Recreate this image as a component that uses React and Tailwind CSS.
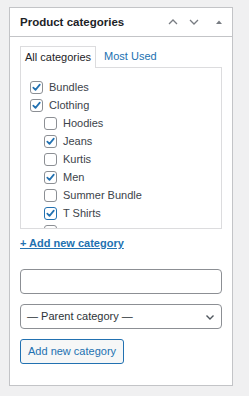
import React from "react";

const categories = [
    { name: "Bundles", checked: true, level: 0 },
    { name: "Clothing", checked: true, level: 0 },
    { name: "Hoodies", checked: false, level: 1 },
    { name: "Jeans", checked: true, level: 1 },
    { name: "Kurtis", checked: false, level: 1 },
    { name: "Men", checked: true, level: 1 },
    { name: "Summer Bundle", checked: false, level: 1 },
    { name: "T Shirts", checked: true, level: 1, focused: true },
];

function Checkbox({ checked, focused }) {
    return (
        <span
            className={
                focused
                    ? "w-[13px] h-[13px] rounded-[3px] border-[1.5px] border-[#2271b1] bg-white flex items-center justify-center shrink-0"
                    : "w-[13px] h-[13px] rounded-[3px] border border-[#8c8f94] bg-white flex items-center justify-center shrink-0"
            }
        >
            {checked && (
                <svg width="11" height="11" viewBox="0 0 11 11">
                    <path
                        d="M2.3 5.6 L4.5 7.9 L8.8 2.6"
                        fill="none"
                        stroke="#2271b1"
                        strokeWidth="1.7"
                        strokeLinecap="round"
                        strokeLinejoin="round"
                    />
                </svg>
            )}
        </span>
    );
}

export default function App() {
    return (
        <div
            className="w-[249px] h-[396px] bg-[#f0f0f1] pt-[7px] pl-[9px] text-[#1d2327]"
            style={{ fontFamily: '"Liberation Sans", Arial, sans-serif' }}
        >
            <div className="w-[224px] h-[379px] bg-white border border-[#c3c4c7] flex flex-col">
                {/* Header */}
                <div className="h-[29px] border-b border-[#c3c4c7] flex items-center pl-[10px] pr-[7px]">
                    <h2 className="text-[11.5px] font-bold flex-1 pt-[1px]">Product categories</h2>
                    <div className="flex items-center">
                        <svg width="20" height="20" viewBox="0 0 20 20" className="mr-[1px]">
                            <path d="M6 12 L10 8 L14 12" fill="none" stroke="#787c82" strokeWidth="1.3" />
                        </svg>
                        <svg width="20" height="20" viewBox="0 0 20 20" className="mr-[9px]">
                            <path d="M6 8 L10 12 L14 8" fill="none" stroke="#787c82" strokeWidth="1.3" />
                        </svg>
                        <svg width="12" height="20" viewBox="0 0 12 20">
                            <path d="M3 12 L6 8.5 L9 12 Z" fill="#787c82" />
                        </svg>
                    </div>
                </div>

                {/* Body */}
                <div className="px-[10px] pt-[8px] flex flex-col">
                    <div className="flex items-end text-[11px] h-[22px]">
                        <div className="h-[22px] px-[4px] border border-b-0 border-[#dcdcde] bg-white relative -mb-px z-10 flex items-center text-[#1d2327]">
                            All categories
                        </div>
                        <div className="h-[21px] pl-[8px] flex items-center text-[#2271b1]">Most Used</div>
                    </div>
                    <div className="h-[162px] border border-[#dcdcde] overflow-hidden pt-[10px] pl-[9px]">
                        {categories.map((c) => (
                            <div
                                key={c.name}
                                className={
                                    c.level === 1
                                        ? "h-[18.1px] flex items-center gap-[6px] pl-[14px] text-[11px] text-[#3c434a]"
                                        : "h-[18.1px] flex items-center gap-[6px] text-[11px] text-[#3c434a]"
                                }
                            >
                                <Checkbox checked={c.checked} focused={c.focused} />
                                <span>{c.name}</span>
                            </div>
                        ))}
                        {/* next row, scrolled out of view */}
                        <div className="h-[18.1px] flex items-center pl-[14px]">
                            <Checkbox checked={false} />
                        </div>
                    </div>

                    <a className="mt-[6px] text-[11px] font-bold text-[#2271b1] underline self-start leading-[16px]">
                        + Add new category
                    </a>

                    <input
                        type="text"
                        className="mt-[18px] h-[25px] w-full border border-[#8c8f94] rounded-[4px] bg-white"
                    />

                    <div className="mt-[10px] h-[25px] w-full border border-[#8c8f94] rounded-[4px] bg-white flex items-center pl-[6px] pr-[5px] text-[11px] text-[#2c3338]">
                        <span className="flex-1">— Parent category —</span>
                        <svg width="12" height="12" viewBox="0 0 12 12">
                            <path d="M2.5 4.5 L6 8 L9.5 4.5" fill="none" stroke="#50575e" strokeWidth="1.4" />
                        </svg>
                    </div>

                    <button className="mt-[10px] self-start h-[25px] px-[7px] border border-[#2271b1] rounded-[3px] bg-[#f6f7f7] text-[#2271b1] text-[11px]">
                        Add new category
                    </button>
                </div>
            </div>
        </div>
    );
}
